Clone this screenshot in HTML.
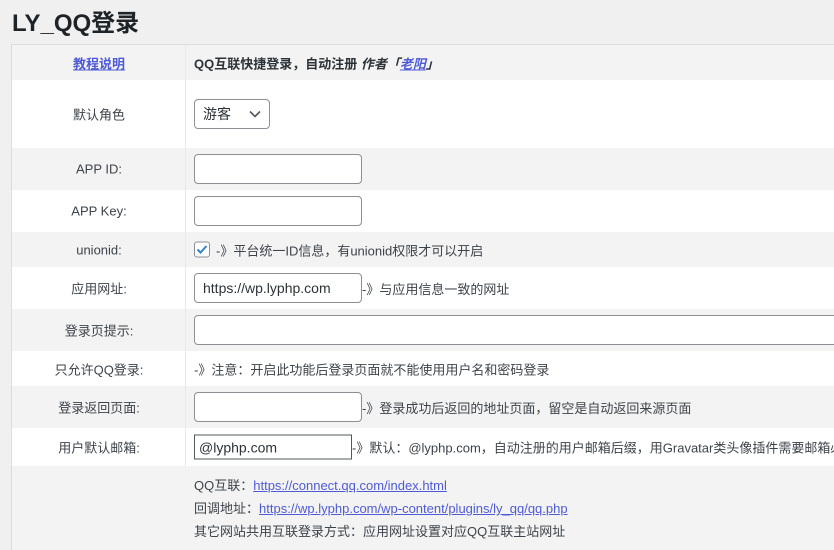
<!DOCTYPE html>
<html><head><meta charset="utf-8"><style>
*{box-sizing:border-box;margin:0;padding:0}
html{width:834px;height:550px;overflow:hidden}
body{width:834px;height:550px;overflow:hidden;background:#f0f0f1;font-family:"Liberation Sans","Noto Sans CJK SC",sans-serif;font-size:13px;color:#3c434a;position:relative}
h1{position:absolute;left:12px;top:3px;font-size:24px;font-weight:600;color:#1d2327}
.tbl{position:absolute;left:11px;top:44px;width:840px;height:506px;border-top:1px solid #dcdcde;border-left:1px solid #dcdcde;overflow:hidden}
.r{position:absolute;left:0;width:840px}
.g{background:#f3f3f3}.w{background:#fff}
.lab{position:absolute;left:0;width:174px;text-align:center;top:50%;transform:translateY(-50%)}
.div{position:absolute;left:173px;top:0;width:1px;background:#e8e8e8}
.c{position:absolute;left:182px;top:50%;transform:translateY(-50%);white-space:nowrap;display:flex;align-items:center}
.in{height:30px;border:1px solid #8c8f94;border-radius:4px;background:#fff;padding:0 8px;font-size:14px;color:#2c3338;display:flex;align-items:center}
a{color:#2271b1;text-decoration:underline}
.lk{color:#4f5bd5}
</style></head><body>
<h1>LY_QQ登录</h1>
<div class="tbl">
<div class="r g" style="top:0;height:35px"><div class="lab"><a class="lk" style="font-weight:600">教程说明</a></div><div class="c" style="font-weight:600;color:#2c3338">QQ互联快捷登录，自动注册&nbsp;<i>作者「<a class="lk">老阳</a>」</i></div></div>
<div class="r w" style="top:35px;height:68px"><div class="lab">默认角色</div><div class="c"><div class="in" style="width:76px;justify-content:space-between;padding:0 8px">游客<svg width="12" height="8" viewBox="0 0 12 8"><path d="M1 1.5 6 6.5 11 1.5" fill="none" stroke="#50575e" stroke-width="1.6"/></svg></div></div></div>
<div class="r g" style="top:103px;height:42px"><div class="lab">APP ID:</div><div class="c"><div class="in" style="width:168px"></div></div></div>
<div class="r w" style="top:145px;height:42px"><div class="lab">APP Key:</div><div class="c"><div class="in" style="width:168px"></div></div></div>
<div class="r g" style="top:187px;height:35px"><div class="lab">unionid:</div><div class="c"><span style="width:16px;height:16px;border:1px solid #8c8f94;border-radius:3px;background:#fff;display:inline-flex;align-items:center;justify-content:center;margin-right:6px"><svg width="12" height="10" viewBox="0 0 12 10"><path d="M1.5 5 4.5 8 10.5 1.5" fill="none" stroke="#3582c4" stroke-width="2"/></svg></span>-》平台统一ID信息，有unionid权限才可以开启</div></div>
<div class="r w" style="top:222px;height:42px"><div class="lab">应用网址:</div><div class="c"><div class="in" style="width:168px">https://wp.lyphp.com</div>-》与应用信息一致的网址</div></div>
<div class="r g" style="top:264px;height:42px"><div class="lab">登录页提示:</div><div class="c"><div class="in" style="width:700px"></div></div></div>
<div class="r w" style="top:306px;height:35px"><div class="lab">只允许QQ登录:</div><div class="c">-》注意：开启此功能后登录页面就不能使用用户名和密码登录</div></div>
<div class="r g" style="top:341px;height:42px"><div class="lab">登录返回页面:</div><div class="c"><div class="in" style="width:168px"></div>-》登录成功后返回的地址页面，留空是自动返回来源页面</div></div>
<div class="r w" style="top:383px;height:38px"><div class="lab">用户默认邮箱:</div><div class="c"><div class="in" style="width:158px;height:25px;border-radius:0;padding:0 4px;border-color:#50575e">@lyphp.com</div>-》默认：@lyphp.com，自动注册的用户邮箱后缀，用Gravatar类头像插件需要邮箱必</div></div>
<div class="r g" style="top:421px;height:120px"><div style="position:absolute;left:182px;top:8px;line-height:23px">QQ互联：<a class="lk">https://connect.qq.com/index.html</a><br>回调地址：<a class="lk">https://wp.lyphp.com/wp-content/plugins/ly_qq/qq.php</a><br>其它网站共用互联登录方式：应用网址设置对应QQ互联主站网址</div></div>
<div class="div" style="height:421px"></div>
</div>
</body></html>
